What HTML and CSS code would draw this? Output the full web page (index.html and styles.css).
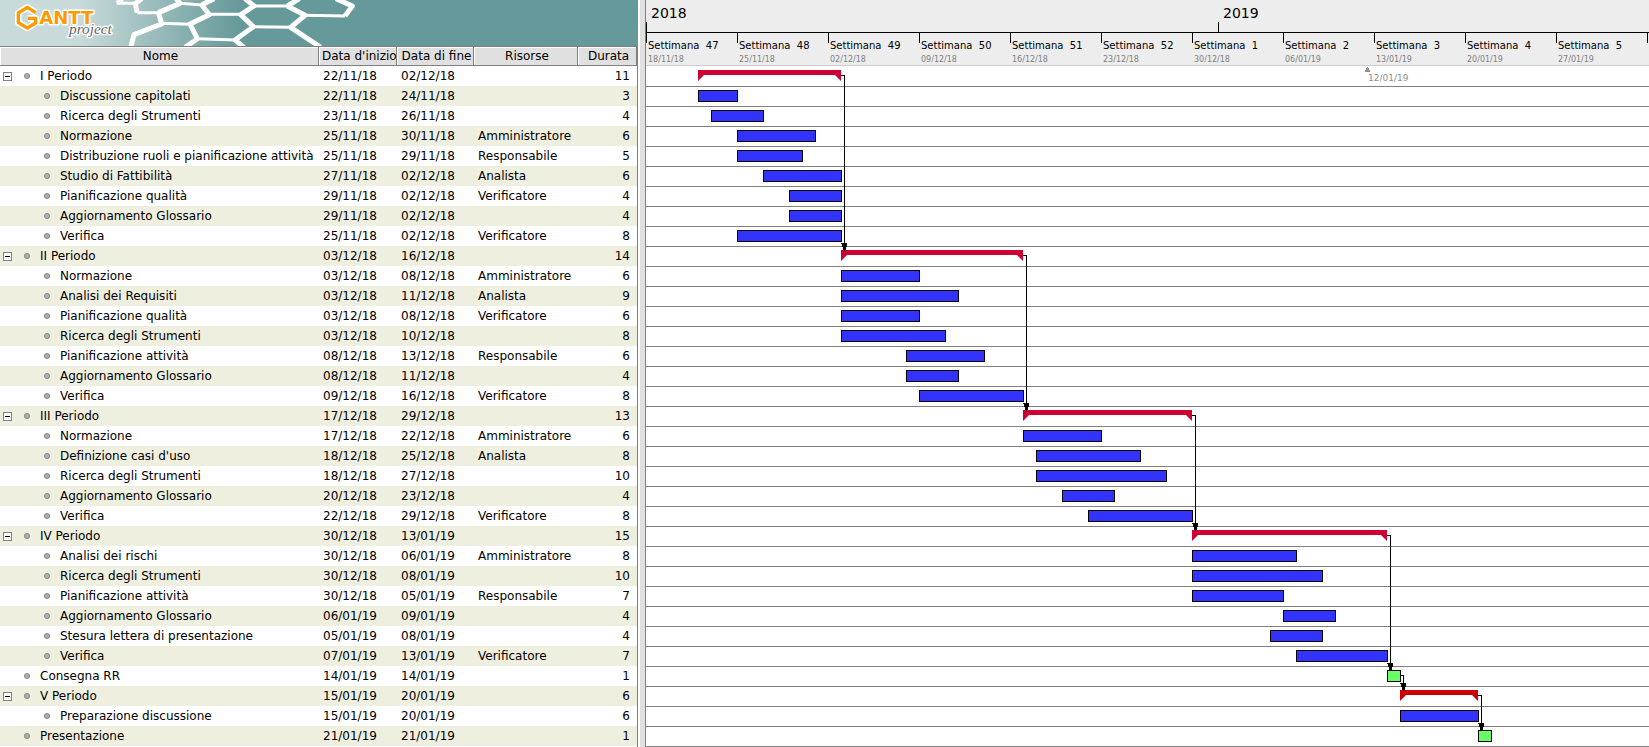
FILE: index.html
```html
<!DOCTYPE html>
<html lang="it">
<head>
<meta charset="utf-8">
<title>GanttProject</title>
<link rel="stylesheet" href="styles.css">
</head>
<body>
<main class="app">
<section class="tasks">
<header class="banner">
<svg class="art" viewBox="0 0 1110 138" preserveAspectRatio="xMinYMin slice" role="img" aria-label="GanttProject">
<g fill="none" stroke="#fff" stroke-linejoin="round">
<path stroke-width="9" d="M350 10H408M412 38H478M540 10L605 15M628 43L722 43M485 70L570 73M592 116L705 120M762 18H862M760 80L872 82M915 46L1035 48"/>
<path stroke-width="15" d="M352 10L366 -4M405 12L425 -4M405 10L412 38M475 38L540 10L528 -5M475 36L485 72L402 104L392 142M605 15L642 -4M605 14L628 44L570 72L592 116L556 142M722 44L762 18L735 -4M720 42L760 80L705 120L732 142M862 18L898 -4M862 18L915 46L872 82L962 142M1035 48L1057 18L1008 -4"/>
</g>
<g stroke="#fff" stroke-linejoin="round" paint-order="stroke">
<path class="mark-halo" d="M107 38L82 22L55 39V68L82 84L107 69V55H84"/>
<path class="mark" d="M107 38L82 22L55 39V68L82 84L107 69V55H84"/>
<text class="logo-name" x="118" y="73">ANTT</text>
<text class="logo-sub" x="207" y="102">project</text>
</g>
</svg>
</header>
<table class="grid">
<colgroup><col class="c-name"><col class="c-start"><col class="c-end"><col class="c-res"><col class="c-dur"></colgroup>
<thead><tr><th>Nome</th><th>Data d'inizio</th><th>Data di fine</th><th>Risorse</th><th>Durata</th></tr></thead>
<tbody>
<tr><td><div class="n"><button class="tg" aria-label="Comprimi"></button><i></i>I Periodo</div></td><td>22/11/18</td><td>02/12/18</td><td></td><td>11</td></tr>
<tr><td><div class="n sub"><i></i>Discussione capitolati</div></td><td>22/11/18</td><td>24/11/18</td><td></td><td>3</td></tr>
<tr><td><div class="n sub"><i></i>Ricerca degli Strumenti</div></td><td>23/11/18</td><td>26/11/18</td><td></td><td>4</td></tr>
<tr><td><div class="n sub"><i></i>Normazione</div></td><td>25/11/18</td><td>30/11/18</td><td>Amministratore</td><td>6</td></tr>
<tr><td><div class="n sub"><i></i>Distribuzione ruoli e pianificazione attività</div></td><td>25/11/18</td><td>29/11/18</td><td>Responsabile</td><td>5</td></tr>
<tr><td><div class="n sub"><i></i>Studio di Fattibilità</div></td><td>27/11/18</td><td>02/12/18</td><td>Analista</td><td>6</td></tr>
<tr><td><div class="n sub"><i></i>Pianificazione qualità</div></td><td>29/11/18</td><td>02/12/18</td><td>Verificatore</td><td>4</td></tr>
<tr><td><div class="n sub"><i></i>Aggiornamento Glossario</div></td><td>29/11/18</td><td>02/12/18</td><td></td><td>4</td></tr>
<tr><td><div class="n sub"><i></i>Verifica</div></td><td>25/11/18</td><td>02/12/18</td><td>Verificatore</td><td>8</td></tr>
<tr><td><div class="n"><button class="tg" aria-label="Comprimi"></button><i></i>II Periodo</div></td><td>03/12/18</td><td>16/12/18</td><td></td><td>14</td></tr>
<tr><td><div class="n sub"><i></i>Normazione</div></td><td>03/12/18</td><td>08/12/18</td><td>Amministratore</td><td>6</td></tr>
<tr><td><div class="n sub"><i></i>Analisi dei Requisiti</div></td><td>03/12/18</td><td>11/12/18</td><td>Analista</td><td>9</td></tr>
<tr><td><div class="n sub"><i></i>Pianificazione qualità</div></td><td>03/12/18</td><td>08/12/18</td><td>Verificatore</td><td>6</td></tr>
<tr><td><div class="n sub"><i></i>Ricerca degli Strumenti</div></td><td>03/12/18</td><td>10/12/18</td><td></td><td>8</td></tr>
<tr><td><div class="n sub"><i></i>Pianificazione attività</div></td><td>08/12/18</td><td>13/12/18</td><td>Responsabile</td><td>6</td></tr>
<tr><td><div class="n sub"><i></i>Aggiornamento Glossario</div></td><td>08/12/18</td><td>11/12/18</td><td></td><td>4</td></tr>
<tr><td><div class="n sub"><i></i>Verifica</div></td><td>09/12/18</td><td>16/12/18</td><td>Verificatore</td><td>8</td></tr>
<tr><td><div class="n"><button class="tg" aria-label="Comprimi"></button><i></i>III Periodo</div></td><td>17/12/18</td><td>29/12/18</td><td></td><td>13</td></tr>
<tr><td><div class="n sub"><i></i>Normazione</div></td><td>17/12/18</td><td>22/12/18</td><td>Amministratore</td><td>6</td></tr>
<tr><td><div class="n sub"><i></i>Definizione casi d'uso</div></td><td>18/12/18</td><td>25/12/18</td><td>Analista</td><td>8</td></tr>
<tr><td><div class="n sub"><i></i>Ricerca degli Strumenti</div></td><td>18/12/18</td><td>27/12/18</td><td></td><td>10</td></tr>
<tr><td><div class="n sub"><i></i>Aggiornamento Glossario</div></td><td>20/12/18</td><td>23/12/18</td><td></td><td>4</td></tr>
<tr><td><div class="n sub"><i></i>Verifica</div></td><td>22/12/18</td><td>29/12/18</td><td>Verificatore</td><td>8</td></tr>
<tr><td><div class="n"><button class="tg" aria-label="Comprimi"></button><i></i>IV Periodo</div></td><td>30/12/18</td><td>13/01/19</td><td></td><td>15</td></tr>
<tr><td><div class="n sub"><i></i>Analisi dei rischi</div></td><td>30/12/18</td><td>06/01/19</td><td>Amministratore</td><td>8</td></tr>
<tr><td><div class="n sub"><i></i>Ricerca degli Strumenti</div></td><td>30/12/18</td><td>08/01/19</td><td></td><td>10</td></tr>
<tr><td><div class="n sub"><i></i>Pianificazione attività</div></td><td>30/12/18</td><td>05/01/19</td><td>Responsabile</td><td>7</td></tr>
<tr><td><div class="n sub"><i></i>Aggiornamento Glossario</div></td><td>06/01/19</td><td>09/01/19</td><td></td><td>4</td></tr>
<tr><td><div class="n sub"><i></i>Stesura lettera di presentazione</div></td><td>05/01/19</td><td>08/01/19</td><td></td><td>4</td></tr>
<tr><td><div class="n sub"><i></i>Verifica</div></td><td>07/01/19</td><td>13/01/19</td><td>Verificatore</td><td>7</td></tr>
<tr><td><div class="n leaf"><i></i>Consegna RR</div></td><td>14/01/19</td><td>14/01/19</td><td></td><td>1</td></tr>
<tr><td><div class="n"><button class="tg" aria-label="Comprimi"></button><i></i>V Periodo</div></td><td>15/01/19</td><td>20/01/19</td><td></td><td>6</td></tr>
<tr><td><div class="n sub"><i></i>Preparazione discussione</div></td><td>15/01/19</td><td>20/01/19</td><td></td><td>6</td></tr>
<tr><td><div class="n leaf"><i></i>Presentazione</div></td><td>21/01/19</td><td>21/01/19</td><td></td><td>1</td></tr>
</tbody>
</table>
</section>
<div class="splitter"></div>
<section class="chart">
<header class="timeline">
<div class="years"><span class="year first">2018</span><span class="year">2019</span></div>
<div class="weeks">
<div class="week"><b>Settimana  47</b><time>18/11/18</time></div>
<div class="week"><b>Settimana  48</b><time>25/11/18</time></div>
<div class="week"><b>Settimana  49</b><time>02/12/18</time></div>
<div class="week"><b>Settimana  50</b><time>09/12/18</time></div>
<div class="week"><b>Settimana  51</b><time>16/12/18</time></div>
<div class="week"><b>Settimana  52</b><time>23/12/18</time></div>
<div class="week"><b>Settimana  1</b><time>30/12/18</time></div>
<div class="week"><b>Settimana  2</b><time>06/01/19</time></div>
<div class="week"><b>Settimana  3</b><time>13/01/19</time></div>
<div class="week"><b>Settimana  4</b><time>20/01/19</time></div>
<div class="week"><b>Settimana  5</b><time>27/01/19</time></div>
<div class="week"></div>
</div>
</header>
<div class="rows">
<div class="row"><div class="sum" style="--s:4;--d:11"></div></div>
<div class="row"><div class="bar" style="--s:4;--d:3"></div></div>
<div class="row"><div class="bar" style="--s:5;--d:4"></div></div>
<div class="row"><div class="bar" style="--s:7;--d:6"></div></div>
<div class="row"><div class="bar" style="--s:7;--d:5"></div></div>
<div class="row"><div class="bar" style="--s:9;--d:6"></div></div>
<div class="row"><div class="bar" style="--s:11;--d:4"></div></div>
<div class="row"><div class="bar" style="--s:11;--d:4"></div></div>
<div class="row"><div class="bar" style="--s:7;--d:8"></div></div>
<div class="row"><div class="sum" style="--s:15;--d:14"></div></div>
<div class="row"><div class="bar" style="--s:15;--d:6"></div></div>
<div class="row"><div class="bar" style="--s:15;--d:9"></div></div>
<div class="row"><div class="bar" style="--s:15;--d:6"></div></div>
<div class="row"><div class="bar" style="--s:15;--d:8"></div></div>
<div class="row"><div class="bar" style="--s:20;--d:6"></div></div>
<div class="row"><div class="bar" style="--s:20;--d:4"></div></div>
<div class="row"><div class="bar" style="--s:21;--d:8"></div></div>
<div class="row"><div class="sum" style="--s:29;--d:13"></div></div>
<div class="row"><div class="bar" style="--s:29;--d:6"></div></div>
<div class="row"><div class="bar" style="--s:30;--d:8"></div></div>
<div class="row"><div class="bar" style="--s:30;--d:10"></div></div>
<div class="row"><div class="bar" style="--s:32;--d:4"></div></div>
<div class="row"><div class="bar" style="--s:34;--d:8"></div></div>
<div class="row"><div class="sum" style="--s:42;--d:15"></div></div>
<div class="row"><div class="bar" style="--s:42;--d:8"></div></div>
<div class="row"><div class="bar" style="--s:42;--d:10"></div></div>
<div class="row"><div class="bar" style="--s:42;--d:7"></div></div>
<div class="row"><div class="bar" style="--s:49;--d:4"></div></div>
<div class="row"><div class="bar" style="--s:48;--d:4"></div></div>
<div class="row"><div class="bar" style="--s:50;--d:7"></div></div>
<div class="row"><div class="bar milestone" style="--s:57;--d:1"></div></div>
<div class="row"><div class="sum critical" style="--s:58;--d:6"></div></div>
<div class="row"><div class="bar" style="--s:58;--d:6"></div></div>
<div class="row"><div class="bar milestone" style="--s:64;--d:1"></div></div>
<svg class="links" aria-hidden="true">
<defs><path id="tip" d="M-3 0H3V4H2V7H-1V4H-2V1H-3Z"/></defs>
<path class="link" d="M195 9.5H198.5V185M377 189.5H380.5V345M546 349.5H549.5V465M741 469.5H744.5V605M755 609.5H757.5V625M832 629.5H835.5V665"/>
<use href="#tip" x="198" y="177"/><use href="#tip" x="380" y="337"/><use href="#tip" x="549" y="457"/><use href="#tip" x="744" y="597"/><use href="#tip" x="757" y="617"/><use href="#tip" x="835" y="657"/>
</svg>
<div class="today"><svg width="5" height="5" aria-hidden="true"><path d="M2 0H3V1H4V3H5V5H0V3H1V1H2Z"/></svg><time>12/01/19</time></div>
</div>
</section>
</main>
</body>
</html>
```
FILE: styles.css
```css
* { box-sizing: border-box; }
body {
  margin: 0;
  background: #fff;
  color: #000;
  font: 12px/20px "DejaVu Sans", sans-serif;
}
.app { display: flex; min-height: 100vh; overflow: hidden; }

.tasks { flex: none; width: 638px; border-right: 1px solid #808080; }
.banner {
  height: 46px;
  margin-right: -2px;
  background: linear-gradient(90deg, #c8dada 0, #c8dada 80px, #699 240px);
}
.art { display: block; width: 370px; height: 46px; overflow: hidden; }
.mark, .mark-halo { fill: none; stroke: #f90; stroke-width: 10; }
.mark-halo { stroke: #fff; stroke-width: 20; }
.logo-name { font: bold 54px "DejaVu Sans", sans-serif; fill: #f90; stroke-width: 9px; }
.logo-sub { font: italic 46px "Liberation Serif", serif; fill: #666; stroke-width: 8px; }

.grid { width: 100%; border-collapse: separate; border-spacing: 0; table-layout: fixed; }
.c-name { width: 319px; }
.c-start { width: 78px; }
.c-end { width: 77px; }
.c-res { width: 104px; }
th {
  height: 20px;
  padding: 1px 0 0 3px;
  overflow: hidden;
  font-weight: normal;
  line-height: 17px;
  white-space: nowrap;
  background: #e0e0e0;
  border: solid #808080;
  border-width: 1px 1px 1px 0;
  box-shadow: inset 1px 1px #fff;
}
td { height: 20px; padding: 0 0 0 4px; line-height: 20px; white-space: nowrap; overflow: hidden; }
td:first-child { padding: 0; }
td:last-child { padding: 0 7px 0 0; text-align: right; }
tbody tr:nth-child(even) { background: #efefe0; }
.n { display: flex; align-items: center; padding-left: 3px; }
.n.leaf { padding-left: 24px; }
.n.sub { padding-left: 44px; }
.n i {
  width: 6px;
  height: 6px;
  margin-right: 10px;
  border: 1px solid #808080;
  border-radius: 50%;
  background: #b0b0b0;
}
.tg {
  width: 9px;
  height: 9px;
  margin-right: 12px;
  padding: 0;
  border: 1px solid #808080;
  background: linear-gradient(#000, #000) center / 5px 1px no-repeat #fff;
}

.splitter {
  flex: none;
  width: 8px;
  background: #e0e0e0;
  border-left: 2px solid #fff;
  border-right: 1px solid #808080;
}

.chart { flex: 1; min-width: 0; overflow: hidden; --day: 13px; }
.timeline { height: 66px; background: #ededed; border-bottom: 1px solid #ccc; }
.years { display: flex; height: 33px; border-bottom: 1px solid #000; }
.year {
  padding: 3px 0 0 5px;
  background: linear-gradient(#000, #000) 0 100% / 1px 10px no-repeat;
  font-size: 14px;
}
.year.first { width: calc(44 * var(--day)); }
.weeks { display: flex; }
.week {
  flex: none;
  width: calc(7 * var(--day));
  height: 32px;
  padding: 6px 0 0 2px;
  background: linear-gradient(#000, #000) 0 0 / 1px 10px no-repeat;
  white-space: pre;
}
.week b { display: block; font-size: 10px; line-height: 14px; font-weight: normal; }
.week time { display: block; color: #808080; font-size: 8px; line-height: 14px; }

.rows { position: relative; padding-top: 1px; }
.row { height: 20px; padding-top: 3px; border-bottom: 1px solid #808080; }
.bar {
  width: calc(var(--d) * var(--day) + 1px);
  height: 12px;
  margin-left: calc(var(--s) * var(--day));
  background: #33f;
  border: 1px solid #000;
}
.milestone { background: #6f6; }
.sum {
  width: calc(var(--d) * var(--day));
  height: 11px;
  margin-left: calc(var(--s) * var(--day));
  background: #c03;
  clip-path: polygon(0 0, 100% 0, 100% 100%, calc(100% - 6px) 5px, 6px 5px, 0 100%);
}
.critical { background: #c00; }
.links { position: absolute; inset: 0; width: 100%; height: 100%; shape-rendering: crispEdges; }
.link { fill: none; stroke: #000; }
.today { position: absolute; top: 1px; left: 719px; color: #909090; }
.today svg { display: block; fill: currentColor; }
.today time { display: block; padding-left: 3px; font-size: 9px; line-height: 12px; }
```
